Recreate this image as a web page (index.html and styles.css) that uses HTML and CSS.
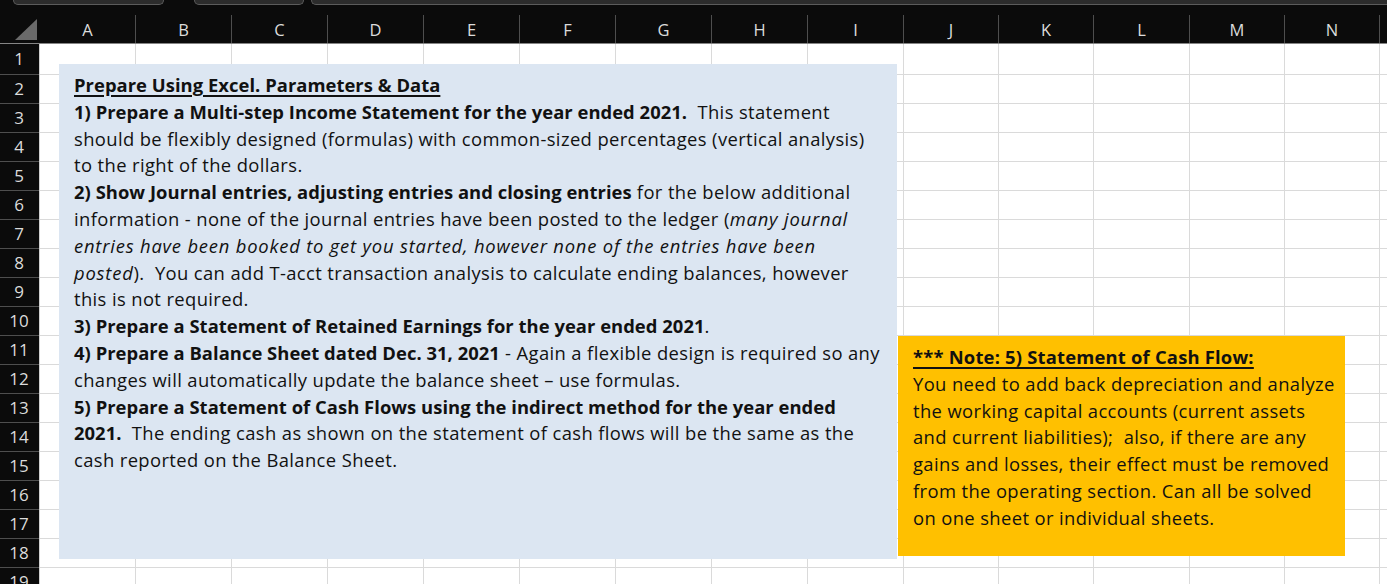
FILE: index.html
```html
<!DOCTYPE html>
<html>
<head>
<meta charset="utf-8">
<link rel="stylesheet" href="styles.css">
</head>
<body>
<div class="header">
  <div class="topbar">
    <div class="pill p1"></div>
    <div class="pill p2"></div>
    <div class="pill p3"></div>
  </div>
  <div class="colhead">
    <div class="corner"><div class="tri"></div></div>
    <div class="ch w96">A</div>
    <div class="ch w96">B</div>
    <div class="ch w96">C</div>
    <div class="ch w96">D</div>
    <div class="ch w96">E</div>
    <div class="ch w96">F</div>
    <div class="ch w96">G</div>
    <div class="ch w96">H</div>
    <div class="ch w96">I</div>
    <div class="ch w95">J</div>
    <div class="ch w95">K</div>
    <div class="ch w96">L</div>
    <div class="ch w95">M</div>
    <div class="ch w95">N</div>
    <div class="ch w96"></div>
  </div>
</div>
<div class="main">
  <div class="rowhead">
    <div class="rh first">1</div>
    <div class="rh">2</div>
    <div class="rh">3</div>
    <div class="rh">4</div>
    <div class="rh">5</div>
    <div class="rh">6</div>
    <div class="rh">7</div>
    <div class="rh">8</div>
    <div class="rh">9</div>
    <div class="rh">10</div>
    <div class="rh">11</div>
    <div class="rh">12</div>
    <div class="rh">13</div>
    <div class="rh">14</div>
    <div class="rh">15</div>
    <div class="rh">16</div>
    <div class="rh">17</div>
    <div class="rh">18</div>
    <div class="rh">19</div>
  </div>
  <div class="cells">
    <div class="col w96"></div>
    <div class="col w96"></div>
    <div class="col w96"></div>
    <div class="col w96"></div>
    <div class="col w96"></div>
    <div class="col w96"></div>
    <div class="col w96"></div>
    <div class="col w96"></div>
    <div class="col w96"></div>
    <div class="col w95"></div>
    <div class="col w95"></div>
    <div class="col w96"></div>
    <div class="col w95"></div>
    <div class="col w95"></div>
    <div class="col w96"></div>

    <div class="box blue">
      <div class="ln"><b><u>Prepare Using Excel. Parameters &amp; Data</u></b></div>
      <div class="ln"><b>1) Prepare a Multi-step Income Statement for the year ended 2021.</b>  This statement</div>
      <div class="ln">should be flexibly designed (formulas) with common-sized percentages (vertical analysis)</div>
      <div class="ln">to the right of the dollars.</div>
      <div class="ln"><b>2) Show Journal entries, adjusting entries and closing entries</b> for the below additional</div>
      <div class="ln">information - none of the journal entries have been posted to the ledger (<i>many journal</i></div>
      <div class="ln"><i>entries have been booked to get you started, however none of the entries have been</i></div>
      <div class="ln"><i>posted</i>).  You can add T-acct transaction analysis to calculate ending balances, however</div>
      <div class="ln">this is not required.</div>
      <div class="ln"><b>3) Prepare a Statement of Retained Earnings for the year ended 2021</b>.</div>
      <div class="ln"><b>4) Prepare a Balance Sheet dated Dec. 31, 2021</b> - Again a flexible design is required so any</div>
      <div class="ln">changes will automatically update the balance sheet – use formulas.</div>
      <div class="ln"><b>5) Prepare a Statement of Cash Flows using the indirect method for the year ended</b></div>
      <div class="ln"><b>2021.</b>  The ending cash as shown on the statement of cash flows will be the same as the</div>
      <div class="ln">cash reported on the Balance Sheet.</div>
    </div>

    <div class="box gold">
      <div class="ln"><b><u>*** Note: 5) Statement of Cash Flow:</u></b></div>
      <div class="ln">You need to add back depreciation and analyze</div>
      <div class="ln">the working capital accounts (current assets</div>
      <div class="ln">and current liabilities);  also, if there are any</div>
      <div class="ln">gains and losses, their effect must be removed</div>
      <div class="ln">from the operating section. Can all be solved</div>
      <div class="ln">on one sheet or individual sheets.</div>
    </div>
  </div>
</div>
</body>
</html>
```

FILE: styles.css
```css
html, body {
  margin: 0;
  padding: 0;
  background: #ffffff;
  overflow: hidden;
}
body {
  width: 1387px;
  height: 584px;
  font-family: "Open Sans", "Noto Sans", sans-serif;
}
.header {
  background: #0b0b0b;
  height: 44px;
  box-sizing: border-box;
  border-bottom: 1px solid #858585;
}
.topbar {
  height: 5px;
  display: flex;
  padding-left: 13px;
}
.pill {
  height: 5px;
  box-sizing: border-box;
  background: #2c2c2c;
  border: 1px solid #5c5c5c;
  border-top: none;
  border-radius: 0 0 6px 6px;
}
.p1 { width: 151px; }
.p2 { width: 110px; margin-left: 30px; }
.p3 { flex: 1; margin-left: 7px; border-right: none; border-radius: 0 0 0 6px; }
.colhead {
  display: flex;
  align-items: flex-end;
  height: 38px;
}
.corner {
  width: 40px;
  height: 38px;
  flex: none;
  position: relative;
}
.tri {
  position: absolute;
  left: 15px;
  top: 14px;
  width: 0;
  height: 0;
  border-style: solid;
  border-width: 0 0 21px 22px;
  border-color: transparent transparent #6a6a6a transparent;
}
.ch {
  flex: none;
  height: 28px;
  box-sizing: border-box;
  border-left: 1px solid #4e4e4e;
  color: #dcdcdc;
  font-size: 16.5px;
  line-height: 30px;
  text-align: center;
}
.ch.w96 { width: 96px; }
.ch.w95 { width: 95px; }
.colhead .ch:nth-child(2) { width: 95px; border-left: none; }
.main {
  display: flex;
  height: 540px;
}
.rowhead {
  width: 40px;
  flex: none;
  background: #0b0b0b;
  box-sizing: border-box;
  border-right: 1px solid #cfcfcf;
  display: flex;
  flex-direction: column;
}
.rh {
  flex: none;
  height: 29px;
  box-sizing: border-box;
  border-bottom: 1px solid #4e4e4e;
  color: #dcdcdc;
  font-size: 17px;
  line-height: 28px;
  text-align: center;
  padding-right: 1px;
}
.rh.first { height: 31px; line-height: 30px; }
.cells {
  flex: 1;
  position: relative;
  display: flex;
  background-image: repeating-linear-gradient(to bottom, transparent 0 28px, #dadada 28px 29px);
  background-position: 0 2px;
}
.col {
  flex: none;
  height: 100%;
  box-sizing: border-box;
  border-right: 1px solid #dadada;
}
.col.w96 { width: 96px; }
.col.w95 { width: 95px; }
.box {
  position: absolute;
  box-sizing: border-box;
  font-family: "Open Sans", "Lato", sans-serif;
  font-size: 18.4px;
  line-height: 26.8px;
  color: #111111;
  padding: 8px 0 0 15px;
  letter-spacing: 0.38px;
}
.ln {
  white-space: pre;
}
.ln b {
  font-weight: 700;
  letter-spacing: 0.04px;
}
.ln i {
  letter-spacing: 0.8px;
}
.gold .ln b {
  letter-spacing: 0.2px;
}
.ln u {
  text-decoration-thickness: 1.5px;
  text-underline-offset: 3px;
}
.blue {
  left: 19px;
  top: 20px;
  width: 838px;
  height: 495px;
  background: #dce6f2;
}
.gold {
  left: 858px;
  top: 292px;
  width: 447px;
  height: 220px;
  background: #ffc000;
}
```
